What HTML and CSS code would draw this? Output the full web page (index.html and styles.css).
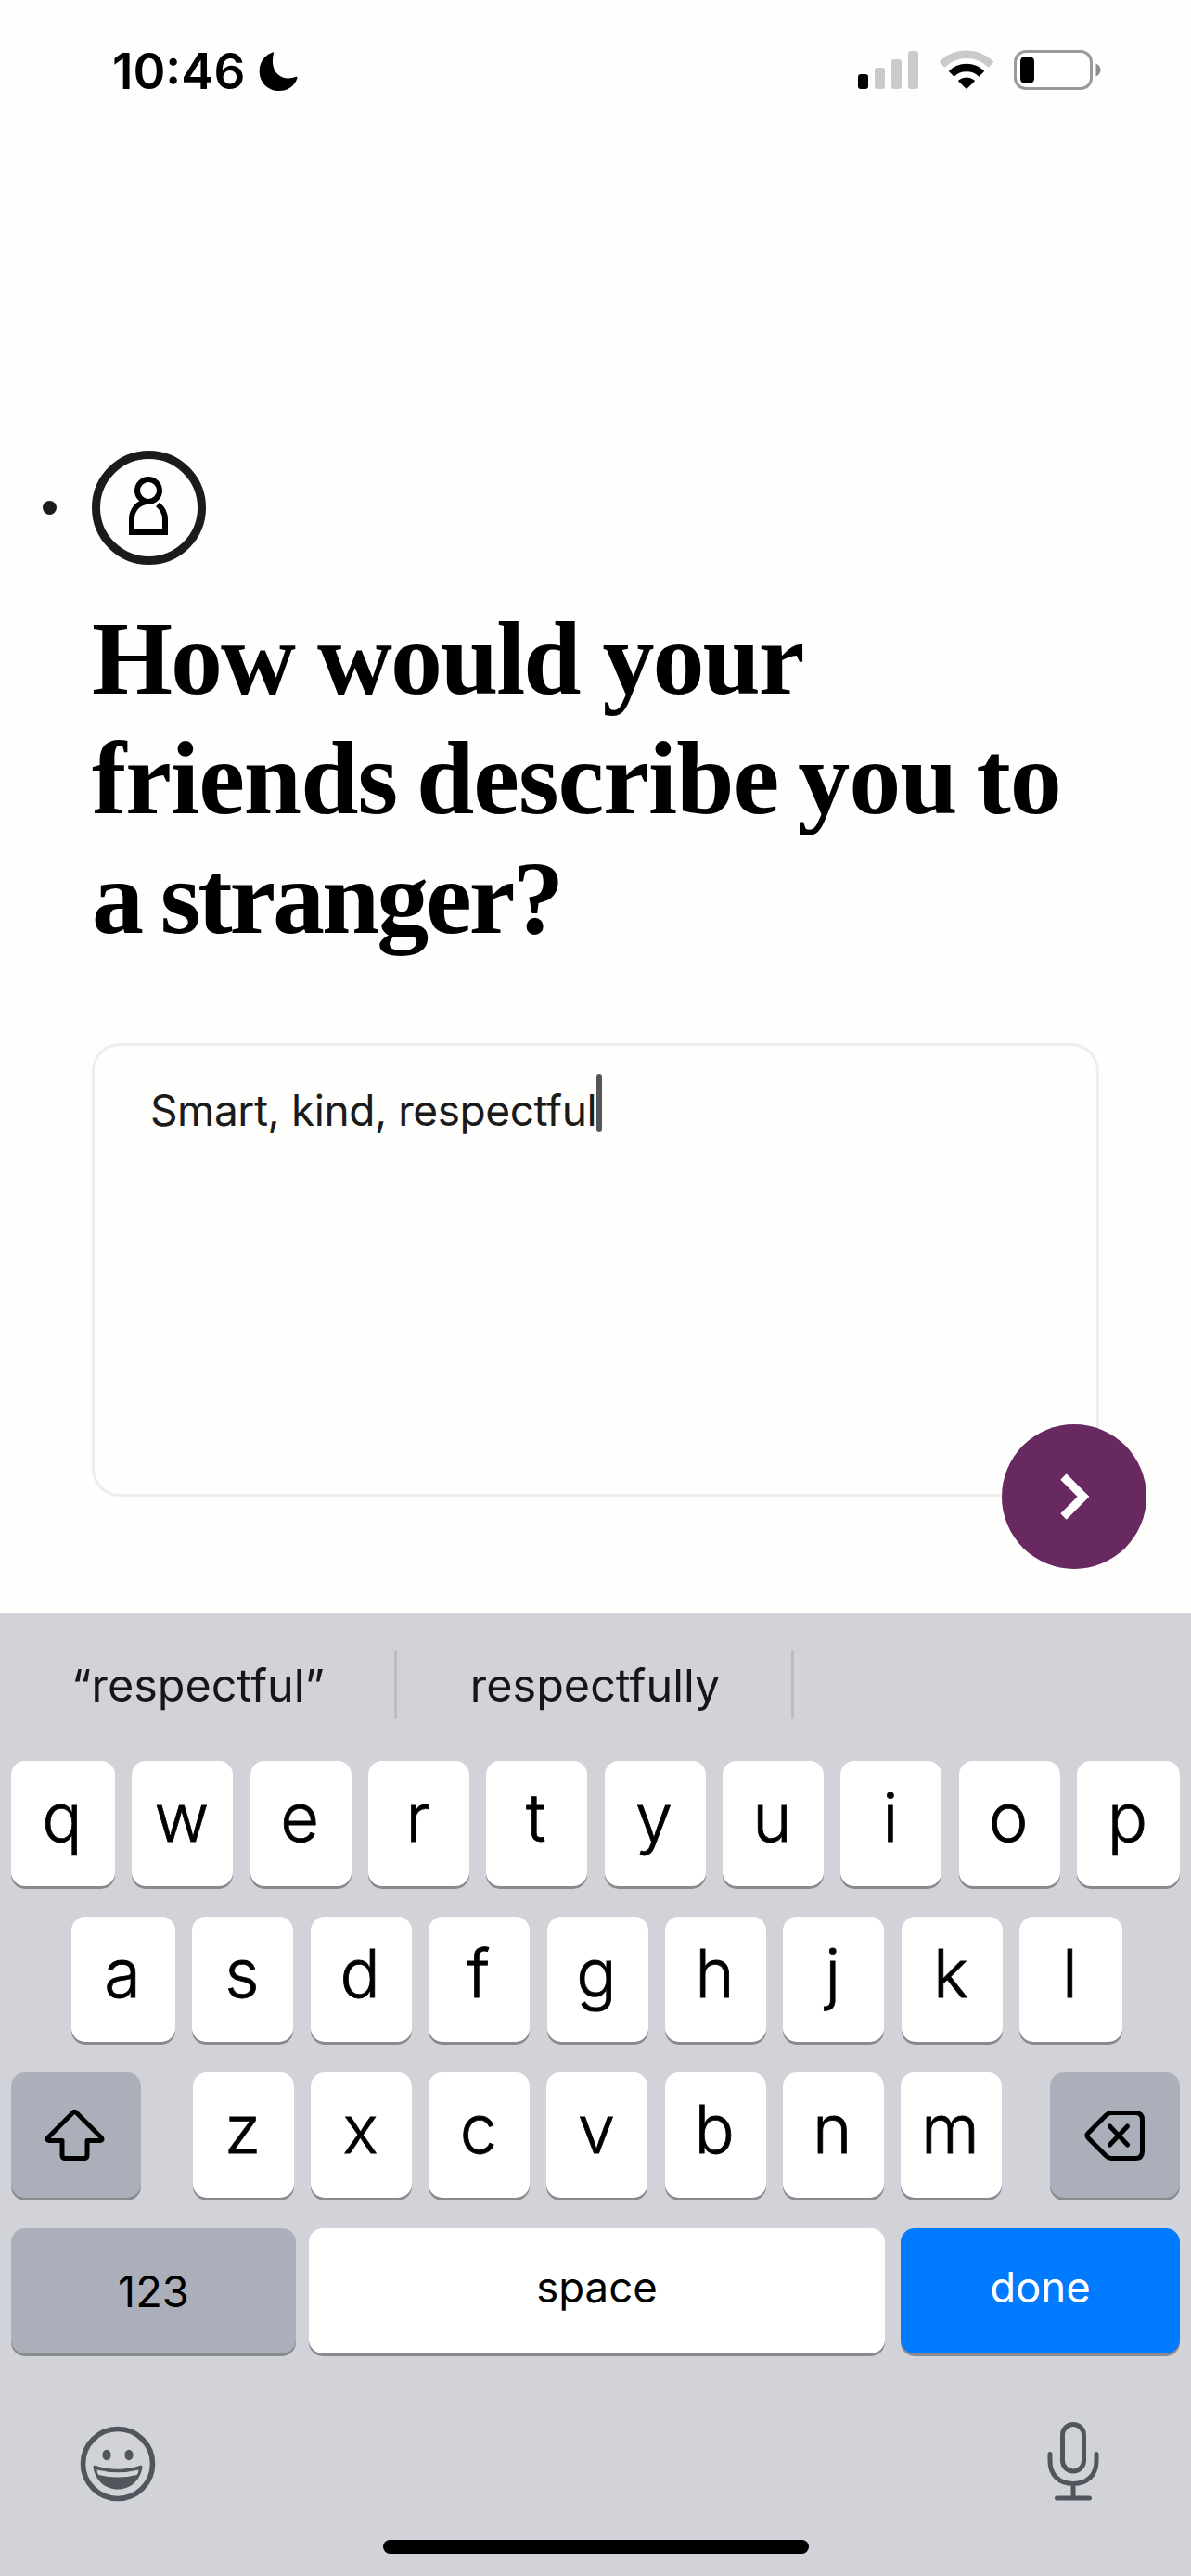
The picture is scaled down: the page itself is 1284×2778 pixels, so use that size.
FILE: index.html
```
<!DOCTYPE html>
<html lang="en">
<head>
<meta charset="utf-8">
<title>Profile prompt</title>
<link rel="stylesheet" href="styles.css">
</head>
<body>
<main class="screen">
  <header class="status">
    <div class="status-left">
      <span class="time">10:46</span>
      <svg class="moon" width="42" height="42" viewBox="0 0 126 126"><path d="M48 3C43 26 42 54 61 72C79 89 101 87 119 81Q126 79 124 86C115 111 93 126 66 126C29 126 2 98 2 62C2 34 19 10 43 2Q50 -1 48 3Z"/></svg>
    </div>
    <div class="status-right">
      <svg width="65" height="43" viewBox="0 0 65 43">
        <rect x="0" y="26" width="11" height="16" rx="3"/>
        <g fill="#cbcac9"><rect x="18" y="19" width="11" height="23" rx="3"/><rect x="36" y="10" width="11" height="32" rx="3"/><rect x="54" y="1" width="11" height="41" rx="3"/></g>
      </svg>
      <svg width="58" height="43" viewBox="0 0 174 129">
        <path d="M7 47A114 114 0 0 1 167 47" fill="none" stroke="#cbcac9" stroke-width="25"/>
        <path d="M38 77A70 70 0 0 1 136 77" fill="none" stroke="#000" stroke-width="25"/>
        <path d="M87 126L61 101Q60 99 62 97A40 40 0 0 1 112 97Q114 99 113 101Z"/>
      </svg>
      <svg width="94" height="43" viewBox="0 0 94 43">
        <rect x="1.5" y="1.5" width="82" height="40" rx="11.5" fill="#fff" stroke="#9a9a9a" stroke-width="3"/>
        <rect x="7" y="7" width="15" height="29" rx="5"/>
        <path d="M88.500 14.500C92 16 93.500 18.500 93.500 21.500C93.500 24.500 92 27 88.500 28.500Z" fill="#8e8e8e"/>
      </svg>
    </div>
  </header>

  <section class="prompt">
    <div class="steps">
      <span class="dot"></span>
      <span class="step">
        <svg width="42" height="63" viewBox="0 0 42 63" fill="none" stroke="#000" stroke-width="6">
          <circle cx="21" cy="15" r="12"/>
          <path d="M21 27C10 27 3 36 3 46V60H39V46C39 39 36 34 31 30"/>
        </svg>
      </span>
    </div>
    <h1 class="title">
      <span class="line line-a">How would your</span>
      <span class="line line-b">friends describe you to</span>
      <span class="line line-c">a stranger?</span>
    </h1>
    <div class="answer">
      <span class="answer-text">Smart, kind, respectful</span><span class="caret"></span>
      <div class="next">
        <svg width="40" height="60" viewBox="0 0 40 60" fill="none" stroke="#fff" stroke-width="9"><path d="M8.500 8.500L30 30L8.500 51.500"/></svg>
      </div>
    </div>
  </section>

  <section class="keyboard">
    <div class="suggestions">
      <span class="hint">“respectful”</span><i class="sep"></i><span class="hint">respectfully</span><i class="sep"></i><span class="hint"></span>
    </div>
    <div class="row row1">
      <b class="key">q</b><b class="key">w</b><b class="key">e</b><b class="key">r</b><b class="key">t</b><b class="key">y</b><b class="key">u</b><b class="key">i</b><b class="key">o</b><b class="key">p</b>
    </div>
    <div class="row row2">
      <b class="key">a</b><b class="key">s</b><b class="key">d</b><b class="key">f</b><b class="key">g</b><b class="key">h</b><b class="key">j</b><b class="key">k</b><b class="key">l</b>
    </div>
    <div class="row row3">
      <b class="key fn shift">
        <svg width="68" height="60" viewBox="0 0 68 60" fill="none" stroke="#000" stroke-width="5" stroke-linejoin="round"><path d="M31.500 5.500Q33.500 3 35.500 5.500L62.500 32.500Q64 35.500 61 35.500H47V51Q47 54.500 43.500 54.500H23.500Q20 54.500 20 51V35.500H6Q3 35.500 4.500 32.500Z"/></svg>
      </b>
      <div class="letters">
        <b class="key">z</b><b class="key">x</b><b class="key">c</b><b class="key">v</b><b class="key">b</b><b class="key">n</b><b class="key">m</b>
      </div>
      <b class="key fn">
        <svg width="66" height="60" viewBox="0 0 66 60" fill="none" stroke="#000" stroke-width="5" stroke-linecap="round" stroke-linejoin="round"><path d="M29 5.500H55Q62.500 5.500 62.500 13V47Q62.500 54.500 55 54.500H29Q26 54.500 23.500 52L4.500 33Q1.500 30 4.500 27L23.500 8Q26 5.500 29 5.500ZM27.500 20L46.500 40M46.500 20L27.500 40"/></svg>
      </b>
    </div>
    <div class="row row4">
      <b class="key fn word num">123</b><b class="key word">space</b><b class="key word done">done</b>
    </div>
    <div class="dock">
      <svg width="82" height="82" viewBox="0 0 82 82">
        <g fill="none" stroke="#50565c" stroke-width="5.600"><circle cx="41" cy="41" r="37.500"/></g>
        <g fill="#50565c"><ellipse cx="29" cy="31.500" rx="4.600" ry="5.700"/><ellipse cx="53" cy="31.500" rx="4.600" ry="5.700"/>
        <path fill-rule="evenodd" d="M14.500 45Q14 42 17.500 43Q41 50.500 64.500 43Q68 42 67.500 45C65 59 55 68.500 41 68.500C27 68.500 17 59 14.500 45ZM18.500 47.500Q18.500 51 20.500 53Q41 58 61.500 53Q63.500 51 63.500 47.500Q41 53 18.500 47.500Z"/></g>
      </svg>
      <svg width="58" height="86" viewBox="0 0 58 86" fill="none" stroke="#50565c" stroke-width="5" stroke-linecap="round"><rect x="17.500" y="3.500" width="23" height="50.500" rx="11.500"/><path d="M4 35.500V43C4 58 14 67.500 29 67.500C44 67.500 54 58 54 43V35.500M29 67.500V83M11.500 83H46.500"/></svg>
    </div>
    <div class="home"></div>
  </section>
</main>
</body>
</html>
```
FILE: styles.css
```
* { box-sizing: border-box; }
body { margin: 0; background: #fefefd; font-family: Inter, "Liberation Sans", sans-serif; color: #000; }
svg { display: block; flex: none; }
.screen { width: 1284px; height: 2778px; display: flex; flex-direction: column; overflow: hidden; }

/* status bar */
.status { height: 486px; padding: 54px 97px 0 121px; display: flex; justify-content: space-between; align-items: flex-start; }
.status-left { display: flex; align-items: flex-start; gap: 15px; height: 43px; }
.time { font-size: 53px; font-weight: 600; line-height: 46px; }
.moon { margin-top: 2px; }
.status-right { display: flex; gap: 22px; }
.status-right svg:first-child { margin-right: 1px; }

/* question and answer */
.prompt { height: 1254px; padding: 0 99px; }
.steps { display: flex; align-items: center; gap: 38px; margin-left: -53px; height: 123px; }
.dot { width: 15px; height: 15px; border-radius: 50%; background: #1b1b1b; }
.step { width: 123px; height: 123px; border: 9px solid #1b1b1b; border-radius: 50%; display: flex; justify-content: center; align-items: center; padding: 0 1px 4px 0; }
.title { margin: 37px 0 0; height: 387px; font: 700 112px/129px "Liberation Serif", serif; }
.line { display: block; white-space: nowrap; }
.line-a { letter-spacing: -2px; word-spacing: -1px; }
.line-b { letter-spacing: -1px; word-spacing: -6px; }
.line-c { letter-spacing: -3.1px; word-spacing: -4px; }
.answer { position: relative; margin-top: 92px; height: 489px; border: 3px solid #eee; border-radius: 30px; padding: 30px 59px 30px 60px; display: flex; align-items: flex-start; }
.answer-text { font-size: 46px; line-height: 78px; letter-spacing: -0.43px; color: #1b1b1b; white-space: nowrap; }
.caret { width: 6px; height: 63px; border-radius: 3px; background: #555; }
.next { position: absolute; right: -54px; bottom: -81px; width: 156px; height: 156px; border-radius: 50%; background: #682960; display: flex; justify-content: center; align-items: center; }

/* keyboard */
.keyboard { height: 1038px; background: #d2d3d9; }
.suggestions { height: 159px; padding-top: 39px; display: grid; grid-template-columns: 425px 3px 425px 3px 1fr; align-items: start; }
.hint { padding-left: 2px; text-align: center; font-size: 48.500px; line-height: 77px; color: #161616; }
.sep { width: 3px; height: 75px; border-radius: 2px; background: #bcbdc2; }
.row { height: 135px; margin: 0 12px 33px; display: grid; justify-content: space-between; }
.row1 { grid-template-columns: 112px repeat(8, 109px) 111px; }
.row2 { margin: 0 74px 33px 77px; grid-template-columns: 112px repeat(7, 109px) 111px; }
.row3 { grid-template-columns: 140px 872px 140px; column-gap: 52px; }
.row4 { grid-template-columns: 307px 621px 301px; justify-content: start; column-gap: 14px; margin-bottom: 0; }
.row4 .done { margin-left: 3px; width: 301px; }
.letters { display: flex; justify-content: space-between; margin-left: 2px; width: 872px; }
.letters .key { width: 109px; }
.key { display: flex; justify-content: center; align-items: center; height: 135px; border-radius: 15px; background: #fff; box-shadow: 0 3px 0 #898a8d; font-size: 72px; font-weight: 300; padding: 0 2px 14px 0; -webkit-text-stroke: 0.8px currentColor; }
.fn { background: #abafba; padding: 0; }
.shift { padding-right: 3px; }
.word { font-size: 45.500px; font-weight: 400; padding: 0 0 9px; -webkit-text-stroke: 0; }
.num { font-size: 47px; padding: 0 0 1px; }
.done { background: #007aff; color: #fff; }
.dock { height: 201px; padding: 73px 98px 0 86px; display: flex; justify-content: space-between; align-items: flex-start; }
.dock svg:first-child { margin-top: 5px; }
.home { width: 459px; height: 15px; margin: 0 auto; border-radius: 8px; background: #000; }
```
